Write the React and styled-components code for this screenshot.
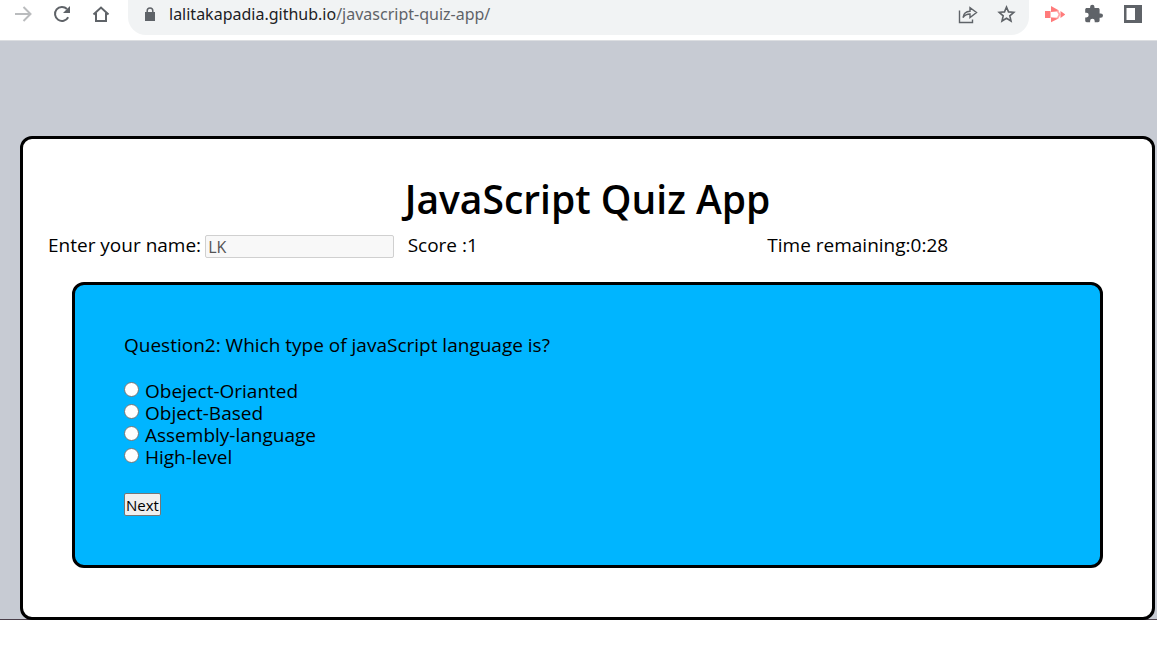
import React from "react";
import styled, { createGlobalStyle } from "styled-components";

const GlobalStyle = createGlobalStyle`
  *, *::before, *::after { box-sizing: border-box; }
  body {
    margin: 0;
    background: #fff;
    color: #000;
    font-family: "Trebuchet MS", "Open Sans", sans-serif;
    font-size: 19px;
    line-height: 22px;
  }
`;

const Toolbar = styled.header`
  display: flex;
  align-items: flex-start;
  height: 41px;
  padding: 0 12px;
  border-bottom: 1px solid #dcdee1;
  color: #5f6368;
`;

const IconButton = styled.button`
  display: flex;
  align-items: center;
  justify-content: center;
  width: 39px;
  height: 28px;
  padding: 0;
  border: 0;
  background: none;
  color: ${(p) => (p.$muted ? "#babcbe" : "inherit")};
`;

const NavButtons = styled.nav`
  display: flex;
  margin-left: -9px;
  margin-right: 8px;
`;

const Extensions = styled.div`
  display: flex;
  margin-left: 6px;
  margin-right: -7px;
`;

const AddressBar = styled.div`
  flex: 1;
  display: flex;
  align-items: flex-start;
  height: 35px;
  padding: 0 3px 0 2px;
  border-radius: 0 0 18px 18px;
  background: #f1f3f4;
`;

const Address = styled.div`
  flex: 1;
  color: #5f6368;
  font-family: "Noto Sans", sans-serif;
  font-size: 16px;
  line-height: 28px;
`;

const Host = styled.span`
  color: #202124;
`;

const Page = styled.main`
  padding: 95px 2px 0 20px;
  border-bottom: 1px solid #4a3f49;
  background: #c7cbd3;
`;

const Card = styled.section`
  margin-bottom: -1px;
  padding: 36px 25px 49px;
  border: 3px solid #000;
  border-radius: 12px;
  background: #fff;
`;

const Title = styled.h1`
  margin: 0;
  font-size: 39px;
  font-weight: 600;
  line-height: 48px;
  text-align: center;
`;

const StatusRow = styled.div`
  display: grid;
  grid-template-columns: repeat(3, 1fr);
  align-items: start;
  margin-top: 12px;
  height: 23px;
  line-height: 20px;
`;

const NameField = styled.label`
  display: flex;
  align-items: flex-start;
  gap: 4px;
  white-space: nowrap;
`;

const NameInput = styled.input`
  width: 189px;
  height: 23px;
  padding: 1px 2px;
  border: 1px solid #d0d0d0;
  border-radius: 2px;
  background: #f8f8f8;
  color: #545454;
  font: inherit;
  font-size: 16px;
`;

const Quiz = styled.form`
  margin: 24px 24px 0;
  padding: 49px;
  border: 3px solid #000;
  border-radius: 12px;
  background: #00b5ff;
`;

const Question = styled.p`
  margin: 0 0 24px;
`;

const Options = styled.div`
  display: flex;
  flex-direction: column;
  align-items: flex-start;
  margin-bottom: 25px;
`;

const Option = styled.label`
  display: flex;
  align-items: center;
  gap: 6px;
  height: 22px;
`;

const Radio = styled.input`
  appearance: none;
  width: 15px;
  height: 15px;
  margin: 0 0 3px;
  border: 1px solid #767676;
  border-radius: 50%;
  background: #fff;
  &:checked { background: radial-gradient(#0075ff 4px, #fff 5px); }
`;

const NextButton = styled.button`
  display: block;
  width: 37px;
  height: 23px;
  padding: 0;
  border: 1px solid #767676;
  border-radius: 2px;
  background: #efefef;
  color: #000;
  font: inherit;
  font-size: 15px;
  line-height: 20px;
`;

const Svg = ({ size = 20, children }) => (
  <svg width={size} height={size} viewBox="0 0 20 20" fill="none" stroke="currentColor" strokeWidth="2" aria-hidden="true">
    {children}
  </svg>
);

const answers = ["Obeject-Orianted", "Object-Based", "Assembly-language", "High-level"];

export default function App() {
  return (
    <>
      <GlobalStyle />
      <Toolbar>
        <NavButtons>
          <IconButton aria-label="Forward" $muted>
            <Svg><path d="M2 10h15M10.500 3l7 7-7 7" /></Svg>
          </IconButton>
          <IconButton aria-label="Reload">
            <Svg>
              <path d="M16.200 13.200A7 7 0 1 1 15 5" />
              <path d="M18 2v7h-7z" fill="currentColor" stroke="none" />
            </Svg>
          </IconButton>
          <IconButton aria-label="Home">
            <Svg><path d="M2.500 10.500L10 3.500l7.500 7M5 9v8h10V9" /></Svg>
          </IconButton>
        </NavButtons>
        <AddressBar>
          <IconButton aria-label="Site information">
            <Svg>
              <path d="M5 8h10v9H5z" fill="currentColor" stroke="none" />
              <path d="M7.200 8.500V6.700a2.800 2.800 0 0 1 5.600 0v1.800" strokeWidth="1.500" />
            </Svg>
          </IconButton>
          <Address><Host>lalitakapadia.github.io</Host>/javascript-quiz-app/</Address>
          <IconButton aria-label="Share">
            <Svg>
              <path d="M1.500 6.500v12h13v-3M5 13.500c.5-4 3-6 7-6.200V3.700L18.500 8.500 12 13.500V10c-3.200 0-5.200 1-7 3.500z" strokeWidth="1.400" />
            </Svg>
          </IconButton>
          <IconButton aria-label="Bookmark">
            <Svg>
              <path d="M9.500 3l2 4.900 5.300.4-4 3.500 1.200 5.200-4.500-2.800L5 17l1.200-5.200-4-3.500 5.300-.4z" strokeWidth="1.600" />
            </Svg>
          </IconButton>
        </AddressBar>
        <Extensions>
          <IconButton aria-label="Screen recorder">
            <Svg>
              <g fill="#ff7b7b" stroke="none">
                <path d="M0 7h5.500v7H0zM6 2L14 6.500 6 8zM6 13.500l7.500 1L6 18.200zM15.500 7l5 3.500-5 3.500z" />
                <path d="M6 6.500l7.500.2 2 3.800-2 4-7.500.5v-1.500h6l1.500-3-1.500-2.800H6z" fillOpacity=".65" />
              </g>
            </Svg>
          </IconButton>
          <IconButton aria-label="Extensions">
            <Svg>
              <path d="M16.800 9.400h-1.200V5.600c0-.9-.7-1.600-1.600-1.600h-3.500V3a2.200 2.200 0 0 0-4.400 0v1H2.800C1.900 4 1.200 4.700 1.200 5.600v3.200h1.200a2.300 2.300 0 0 1 0 4.600H1.200v3.200c0 .9.7 1.600 1.600 1.600h3.300V17a2.300 2.300 0 0 1 4.600 0v1.200H14c.9 0 1.600-.7 1.600-1.600v-2.800h1.200a2.200 2.200 0 0 0 0-4.400z" fill="currentColor" stroke="none" />
            </Svg>
          </IconButton>
          <IconButton aria-label="Side panel">
            <Svg>
              <path d="M1 1h18v18H1zM3.500 4v12H12V4z" fill="currentColor" fillRule="evenodd" stroke="none" />
            </Svg>
          </IconButton>
        </Extensions>
      </Toolbar>
      <Page>
        <Card>
          <Title>JavaScript Quiz App</Title>
          <StatusRow>
            <NameField>
              Enter your name:
              <NameInput type="text" defaultValue="LK" disabled />
            </NameField>
            <span>Score :1</span>
            <span>Time remaining:0:28</span>
          </StatusRow>
          <Quiz onSubmit={(e) => e.preventDefault()}>
            <Question>Question2: Which type of javaScript language is?</Question>
            <Options role="radiogroup" aria-label="Answers">
              {answers.map((answer) => (
                <Option key={answer}>
                  <Radio type="radio" name="answer" value={answer} />
                  {answer}
                </Option>
              ))}
            </Options>
            <NextButton type="submit">Next</NextButton>
          </Quiz>
        </Card>
      </Page>
    </>
  );
}
